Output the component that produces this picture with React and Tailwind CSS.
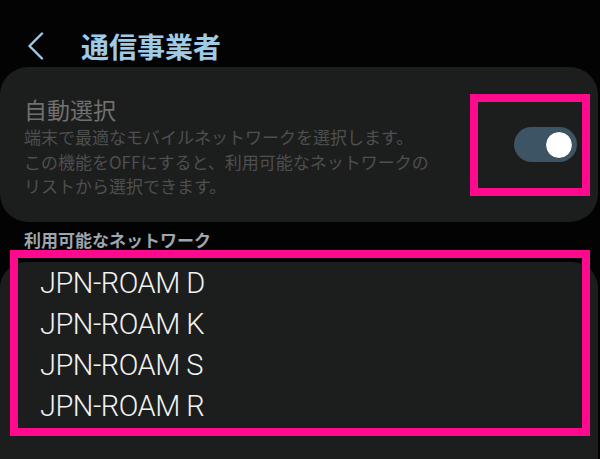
import React from "react";

const JP = { fontFamily: '"Noto Sans CJK JP", "Noto Sans", sans-serif' };
const LAT = { fontFamily: 'Roboto, "Noto Sans", sans-serif' };

export default function App() {
  const nets = ["JPN-ROAM D", "JPN-ROAM K", "JPN-ROAM S", "JPN-ROAM R"];
  return (
    <div className="relative w-[600px] h-[459px] overflow-hidden bg-[#030303]" style={JP}>
      {/* Header */}
      <div className="h-[67px] flex items-start pt-[29px] pl-[27px]">
        <svg width="17" height="28" viewBox="0 0 17 28" className="mt-[3px]">
          <polyline points="15,1.5 2.5,14 15,26.5" fill="none" stroke="#9fcbe6" strokeWidth="2.4" strokeLinecap="round" strokeLinejoin="round" />
        </svg>
        <div className="ml-[37px] text-[28px] leading-[34px] font-bold text-[#9ecbe7]">通信事業者</div>
      </div>

      {/* Auto select card */}
      <div className="w-[598px] h-[155px] rounded-[28px] bg-[#1c1d1d] flex items-center pl-[24px] pr-[21px]">
        <div className="flex-1 self-start pt-[27px]">
          <div className="text-[23px] leading-[30px] text-[#707070]">自動選択</div>
          <div className="mt-[1px] text-[17px] leading-[24.5px] text-[#4e4f4f]">
            端末で最適なモバイルネットワークを選択します。
            <br />
            この機能をOFFにすると、利用可能なネットワークの
            <br />
            リストから選択できます。
          </div>
        </div>
        <div className="w-[63px] h-[35px] rounded-full bg-[#3d5465] flex items-center justify-end pr-[4px]">
          <div className="w-[28px] h-[28px] rounded-full bg-white border border-[#2a3a46]" />
        </div>
      </div>

      {/* Section label */}
      <div className="mt-[6px] pl-[24px] text-[17px] leading-[24px] font-bold text-[#9ea6ad]">利用可能なネットワーク</div>

      {/* Network list card */}
      <div className="mt-[10px] w-[598px] h-[220px] rounded-t-[26px] bg-[#1c1d1d] pt-[1px] pl-[40px]" style={LAT}>
        {nets.map((n) => (
          <div key={n} className="text-[29px] leading-[41px] font-light text-[#f2f2f2] tracking-[-0.5px]">
            {n}
          </div>
        ))}
      </div>

      {/* Annotation overlays */}
      <div className="absolute left-[470px] top-[94px] w-[120px] h-[102px] border-[8px] border-[#ff0a8e]" />
      <div className="absolute left-[10px] top-[250px] w-[580px] h-[186px] border-[8px] border-[#ff0a8e]" />
    </div>
  );
}
